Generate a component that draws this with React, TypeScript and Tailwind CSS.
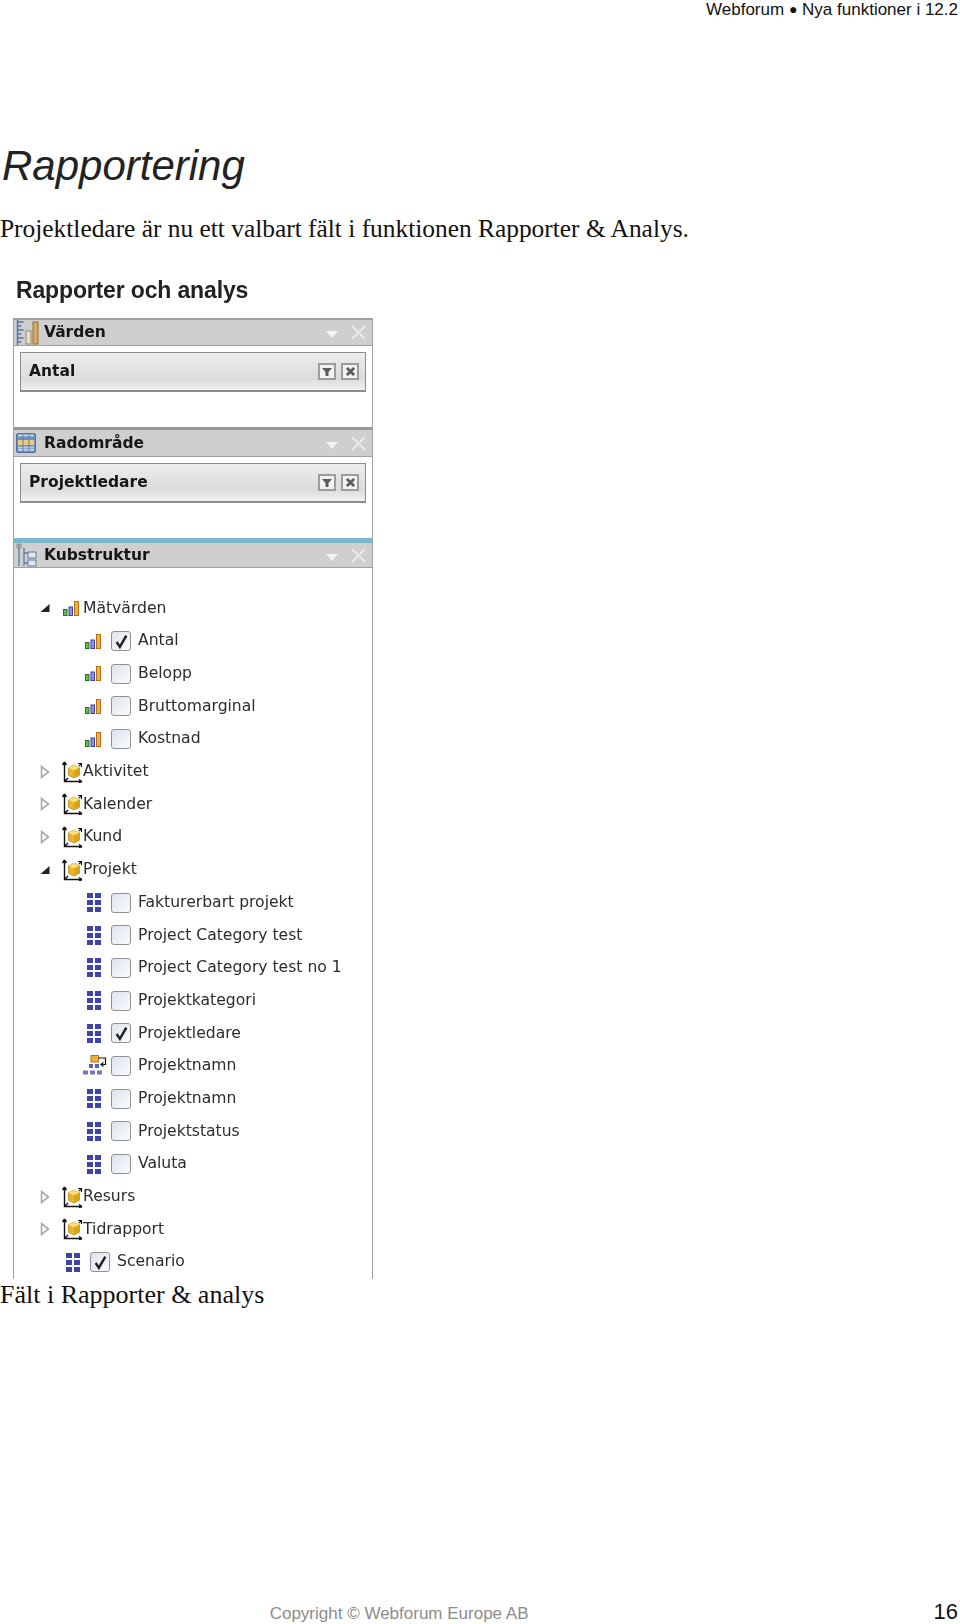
import type { ReactNode } from 'react';

function BarsIcon({ className }: { className: string }) {
  return (
    <svg viewBox="0 0 16 15" className={className}>
      <rect x="0.5" y="8.500" width="3.500" height="6" fill="#6cb455" stroke="#1f7a1c" />
      <rect x="6" y="6" width="3.500" height="8.500" fill="#8f94dc" stroke="#3a40a4" />
      <rect x="11.500" y="0.500" width="4" height="14" fill="#f0ae48" stroke="#b86e10" />
    </svg>
  );
}

function GridIcon({ className }: { className: string }) {
  return (
    <svg viewBox="0 0 14 19" className={className} fill="#3f44aa">
      <rect x="0" y="0" width="6" height="5" />
      <rect x="8" y="0" width="6" height="5" />
      <rect x="0" y="7" width="6" height="5" />
      <rect x="8" y="7" width="6" height="5" />
      <rect x="0" y="14" width="6" height="5" />
      <rect x="8" y="14" width="6" height="5" />
    </svg>
  );
}

function HierarchyIcon() {
  return (
    <svg viewBox="0 0 24 21" className="w-[24px] h-[21px]">
      <rect x="8" y="0.500" width="7.500" height="6.500" fill="#f0b030" stroke="#a87820" />
      <path d="M15.500 3h7v6.500h-4M20.500 7.500l-2.500 2 2.500 2" fill="none" stroke="#111" strokeWidth="1.200" />
      <rect x="6" y="9" width="4" height="4" fill="#5a60b8" />
      <rect x="12" y="9" width="4" height="4" fill="#5a60b8" />
      <rect x="0" y="15.500" width="5" height="4" fill="#6f74c4" />
      <rect x="7" y="15.500" width="5" height="4" fill="#6f74c4" />
      <rect x="14" y="15.500" width="5" height="4" fill="#6f74c4" />
    </svg>
  );
}

function DimensionIcon() {
  return (
    <svg viewBox="0 0 21 22" className="w-[21px] h-[22px] shrink-0">
      <path d="M2.500 1v19.500H20M2.500 1L0.500 4M2.500 1L4.500 4M20 20.500l-3-2M20 20.500l-3 1.500M3 20l3-3" fill="none" stroke="#111" strokeWidth="1.400" />
      <path d="M16 2.500h3.500V6M19.500 2.500l-2.500 2.500" fill="none" stroke="#111" strokeWidth="1.100" />
      <path d="M12 4l5.500 2.800v7.400L12 17l-5.500-2.800V6.800z" fill="#e8b62c" stroke="#b88a18" strokeWidth="0.800" />
      <path d="M6.500 6.800L12 9.600l5.500-2.800L12 4z" fill="#f6e07a" />
      <path d="M12 9.600V17l5.500-2.800V6.800z" fill="#dca420" />
    </svg>
  );
}

function Checkbox({ checked }: { checked?: boolean }) {
  return (
    <span className="w-[20px] h-[20px] shrink-0 rounded-[3px] border-[1.5px] border-[#8e9296] bg-gradient-to-br from-[#dfe3ec] to-[#fafbfd] flex items-center justify-center">
      {checked && (
        <svg viewBox="0 0 14 14" className="w-[15px] h-[15px]">
          <path d="M2.500 7.500L5.500 12L11.500 1.500" fill="none" stroke="#222" strokeWidth="2.300" />
        </svg>
      )}
    </span>
  );
}

function Arrow({ open }: { open?: boolean }) {
  return (
    <span className="w-[22px] shrink-0 flex">
      {open ? (
        <svg viewBox="0 0 10 10" className="w-[10px] h-[10px]">
          <path d="M9.500 1v8H0.500z" fill="#222" />
        </svg>
      ) : (
        <svg viewBox="0 0 10 14" className="w-[10px] h-[14px]">
          <path d="M1.500 1.500L8.500 7L1.500 12.500z" fill="#fafafa" stroke="#a8acb0" strokeWidth="1.600" />
        </svg>
      )}
    </span>
  );
}

function Row({ children }: { children: ReactNode }) {
  return <div className="h-[32.7px] flex items-center text-[15.6px] text-[#2c2c2c] whitespace-nowrap">{children}</div>;
}

function GroupRow({ label, open, bars }: { label: string; open?: boolean; bars?: boolean }) {
  return (
    <Row>
      <span className="w-[26px] shrink-0" />
      <Arrow open={open} />
      <span className="w-[21px] shrink-0 flex">
        {bars ? <BarsIcon className="w-[16px] h-[15px] ml-[1px]" /> : <DimensionIcon />}
      </span>
      <span>{label}</span>
    </Row>
  );
}

function FieldRow({ label, icon, checked }: { label: string; icon: 'bars' | 'grid' | 'hier'; checked?: boolean }) {
  return (
    <Row>
      <span className={icon === 'hier' ? 'w-[97px] shrink-0 flex justify-end pr-[4px]' : 'w-[97px] shrink-0 flex justify-end pr-[10px]'}>
        {icon === 'bars' && <BarsIcon className="w-[16px] h-[15px]" />}
        {icon === 'grid' && <GridIcon className="w-[14px] h-[19px]" />}
        {icon === 'hier' && <HierarchyIcon />}
      </span>
      <Checkbox checked={checked} />
      <span className="ml-[7px]">{label}</span>
    </Row>
  );
}

function PanelHeader({ title, icon, heightClass }: { title: string; icon: ReactNode; heightClass: string }) {
  return (
    <div className={`${heightClass} bg-[#cfcfcf] border-b border-[#a0a0a0] flex items-center pl-[2px] pr-[6px]`}>
      <span className="w-[28px] shrink-0 flex">{icon}</span>
      <span className="mt-[1px] font-bold text-[15.5px] text-[#161616]">{title}</span>
      <svg viewBox="0 0 12 7" className="w-[12px] h-[7px] ml-auto mt-[4px]">
        <path d="M0 0h12L6 7z" fill="#f4f4f4" />
      </svg>
      <svg viewBox="0 0 14 14" className="w-[15px] h-[15px] ml-[13px]">
        <path d="M1 1l12 12M13 1L1 13" stroke="#ececec" strokeWidth="1.800" />
      </svg>
    </div>
  );
}

function FieldCard({ label }: { label: string }) {
  return (
    <div className="mx-[6px] mt-[6px] h-[40px] border border-b-2 border-[#8c8c8c] bg-gradient-to-b from-[#ececec] via-[#dcdcdc] via-70% to-[#f2f2f2] flex items-center pl-[8px] pr-[6px]">
      <span className="mt-[1px] font-bold text-[15.5px] text-[#161616]">{label}</span>
      <span className="ml-auto w-[18px] h-[17px] border-2 border-[#9c9c9c] bg-[#f2f2f2] flex items-center justify-center">
        <svg viewBox="0 0 10 8" className="w-[10px] h-[8px]">
          <path d="M0 0h10L6.500 4v4h-3V4z" fill="#5c5c5c" />
        </svg>
      </span>
      <span className="ml-[5px] w-[18px] h-[17px] border-2 border-[#9c9c9c] bg-[#f2f2f2] flex items-center justify-center">
        <svg viewBox="0 0 10 10" className="w-[9px] h-[9px]">
          <path d="M1 1l8 8M9 1L1 9" stroke="#5c5c5c" strokeWidth="3" />
        </svg>
      </span>
    </div>
  );
}

function ValuesIcon() {
  return (
    <svg viewBox="0 0 24 25" className="w-[24px] h-[25px]">
      <path d="M1.500 0v25M1.500 2h6M1.500 6h4M1.500 10h6M1.500 14h4M1.500 18h6M1.500 22h4" stroke="#4f76a4" strokeWidth="1.500" fill="none" />
      <rect x="10" y="11" width="5" height="13" fill="#f3dcb8" stroke="#8a8a8a" />
      <rect x="17" y="2" width="5" height="22" fill="#e0a860" stroke="#8a7040" />
    </svg>
  );
}

function TableIcon() {
  return (
    <svg viewBox="0 0 20 20" className="w-[20px] h-[20px]">
      <rect x="0.500" y="0.500" width="19" height="19" rx="1.500" fill="#6d8fc0" stroke="#52709e" />
      <path d="M2 7h16v5H2z" fill="#eecb78" />
      <path d="M2 2.500h16M2 14.500h16M2 17h16" stroke="#b9cbe6" strokeWidth="2" />
      <path d="M7 2v16M13 2v16" stroke="#5a78a8" strokeWidth="1" />
    </svg>
  );
}

function CubeTreeIcon() {
  return (
    <svg viewBox="0 0 22 24" className="w-[22px] h-[24px]">
      <rect x="0.500" y="0.500" width="5" height="5" fill="#9a9a9a" />
      <path d="M3 5v18M8 5v18M8 10h4M8 20h4" stroke="#5a7ea8" strokeWidth="1.300" fill="none" />
      <rect x="12" y="9" width="8" height="6" fill="#dfe6f2" stroke="#6a7a90" />
      <rect x="12" y="17" width="8" height="6" fill="#dfe6f2" stroke="#6a7a90" />
    </svg>
  );
}

export default function App() {
  return (
    <div className="w-[960px] h-[1624px] bg-white flex flex-col overflow-hidden font-['Liberation_Sans',sans-serif]">
      <div className="mt-[1px] h-[17px] leading-[17px] text-right pr-[2px] text-[17px] text-[#111]">
        Webforum <span className="text-[14px] align-[1px]">●</span> Nya funktioner i 12.2
      </div>

      <h1 className="mt-[123px] pl-[2px] text-[42px] leading-[50px] italic text-[#222]">Rapportering</h1>
      <p className="mt-[22px] text-[25.4px] leading-[30px] text-[#111] font-['Liberation_Serif',serif]">
        Projektledare är nu ett valbart fält i funktionen Rapporter &amp; Analys.
      </p>

      <div className="blur-[0.4px]">
        <div className="mt-[33px] pl-[16px] text-[23px] leading-[28px] font-bold text-[#222] tracking-[-0.15px]">
          Rapporter och analys
        </div>

        <div className="mt-[14px] ml-[13px] w-[360px] h-[961px] border-x border-[#a0a0a0] font-['DejaVu_Sans',sans-serif] overflow-hidden">
          <div className="h-[109px] border-t-2 border-[#a0a0a0]">
            <PanelHeader title="Värden" icon={<ValuesIcon />} heightClass="h-[26px]" />
            <FieldCard label="Antal" />
          </div>
          <div className="h-[111px] border-t-[3px] border-[#989898]">
            <PanelHeader title="Radområde" icon={<TableIcon />} heightClass="h-[27px]" />
            <FieldCard label="Projektledare" />
          </div>
          <div className="border-t-[5px] border-[#79b8cc]">
            <PanelHeader title="Kubstruktur" icon={<CubeTreeIcon />} heightClass="h-[25px]" />
            <div className="pt-[24px]">
              <GroupRow label="Mätvärden" open bars />
              <FieldRow label="Antal" icon="bars" checked />
              <FieldRow label="Belopp" icon="bars" />
              <FieldRow label="Bruttomarginal" icon="bars" />
              <FieldRow label="Kostnad" icon="bars" />
              <GroupRow label="Aktivitet" />
              <GroupRow label="Kalender" />
              <GroupRow label="Kund" />
              <GroupRow label="Projekt" open />
              <FieldRow label="Fakturerbart projekt" icon="grid" />
              <FieldRow label="Project Category test" icon="grid" />
              <FieldRow label="Project Category test no 1" icon="grid" />
              <FieldRow label="Projektkategori" icon="grid" />
              <FieldRow label="Projektledare" icon="grid" checked />
              <FieldRow label="Projektnamn" icon="hier" />
              <FieldRow label="Projektnamn" icon="grid" />
              <FieldRow label="Projektstatus" icon="grid" />
              <FieldRow label="Valuta" icon="grid" />
              <GroupRow label="Resurs" />
              <GroupRow label="Tidrapport" />
              <Row>
                <span className="w-[52px] shrink-0" />
                <GridIcon className="w-[14px] h-[19px] mr-[10px]" />
                <Checkbox checked />
                <span className="ml-[7px]">Scenario</span>
              </Row>
            </div>
          </div>
        </div>
      </div>

      <p className="mt-[1px] text-[26px] leading-[30px] text-[#111] font-['Liberation_Serif',serif]">
        Fält i Rapporter &amp; analys
      </p>

      <div className="mt-auto h-[24px] flex items-end justify-end pr-[2px]">
        <span className="text-[17px] leading-[20px] text-[#8c8c8c] mr-[405px]">Copyright © Webforum Europe AB</span>
        <span className="text-[22px] leading-[24px] text-[#111]">16</span>
      </div>
    </div>
  );
}
